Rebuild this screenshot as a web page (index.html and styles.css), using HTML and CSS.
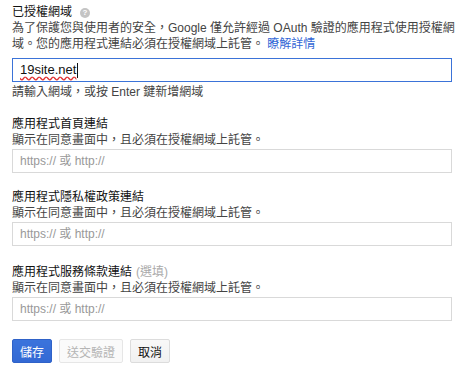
FILE: index.html
```html
<!DOCTYPE html>
<html lang="zh-Hant">
<head>
    <meta charset="UTF-8">
    <meta name="viewport" content="width=device-width, initial-scale=1.0">
    <title>OAuth 同意畫面</title>
    <link rel="stylesheet" href="styles.css">
</head>
<body>
    <div class="container">
        <div class="field">
            <div class="field-title">已授權網域 <span class="help-icon">?</span></div>
            <p class="field-desc"><span class="nowrap">為了保護您與使用者的安全，Google 僅允許經過 OAuth 驗證的應用程式使用授權網</span><br>域。您的應用程式連結必須在授權網域上託管。 <a href="#" class="link">瞭解詳情</a></p>
            <div class="text-input text-input-focus"><span class="misspelled">19site.net</span><span class="caret"></span></div>
            <p class="field-hint">請輸入網域，或按 Enter 鍵新增網域</p>
        </div>

        <div class="field field-gap">
            <div class="field-title">應用程式首頁連結</div>
            <p class="field-desc">顯示在同意畫面中，且必須在授權網域上託管。</p>
            <input type="text" class="text-input" placeholder="https:// 或 http://">
        </div>

        <div class="field field-gap">
            <div class="field-title">應用程式隱私權政策連結</div>
            <p class="field-desc">顯示在同意畫面中，且必須在授權網域上託管。</p>
            <input type="text" class="text-input" placeholder="https:// 或 http://">
        </div>

        <div class="field field-gap field-last">
            <div class="field-title">應用程式服務條款連結 <span class="optional">(選填)</span></div>
            <p class="field-desc">顯示在同意畫面中，且必須在授權網域上託管。</p>
            <input type="text" class="text-input" placeholder="https:// 或 http://">
        </div>

        <div class="actions">
            <button class="btn btn-primary">儲存</button>
            <button class="btn btn-disabled" disabled>送交驗證</button>
            <button class="btn">取消</button>
        </div>
    </div>
</body>
</html>
```

FILE: styles.css
```css
body { margin: 0; background: #fff; font-family: "Liberation Sans", Arial, "Noto Sans CJK TC", sans-serif; font-size: 12px; line-height: 16px; color: #444; }
.container { width: 440px; padding: 4px 12px 0; }
.field-gap { margin-top: 16px; }
.field-last { margin-top: 18px; }
.field-title { color: #111; display: flex; align-items: center; gap: 8px; }
.help-icon { display: inline-flex; justify-content: center; align-items: center; width: 10px; height: 10px; border-radius: 50%; background: #c4c4c4; color: #fff; font-size: 8px; font-weight: bold; line-height: 10px; margin-top: 1px; }
.optional { color: #aaa; margin-left: -4px; }
.field-desc { margin: 0; }
.nowrap { white-space: nowrap; }
.link { color: #3367d6; text-decoration: none; }
.field-hint { margin: 2px 0 0; }
.text-input { display: block; box-sizing: border-box; width: 440px; height: 24px; margin-top: 1px; padding: 0 7px; border: 1px solid #d9d9d9; border-radius: 0; font-family: inherit; font-size: 12px; color: #222; outline: none; }
.text-input::placeholder { color: #999; }
.text-input-focus { display: flex; align-items: center; margin-top: 6px; border-color: #3b73d8; font-size: 13px; color: #111; }
.misspelled { text-decoration: underline wavy #e03030; text-decoration-skip-ink: none; text-underline-offset: 2px; }
.caret { width: 1px; height: 15px; margin-left: 1px; background: #111; }
.actions { display: flex; gap: 7px; margin-top: 18px; }
.btn { height: 24px; padding: 0 7px; border: 1px solid #dcdcdc; border-radius: 2px; background: linear-gradient(#f8f8f8, #f1f1f1); font-family: inherit; font-size: 12px; color: #111; cursor: pointer; }
.btn-primary { background: linear-gradient(#3b74dc, #3369d4); border-color: #2f62c8; color: #fff; }
.btn-disabled { background: #fafafa; border-color: #e6e6e6; color: #b5b5b5; cursor: default; }
```
